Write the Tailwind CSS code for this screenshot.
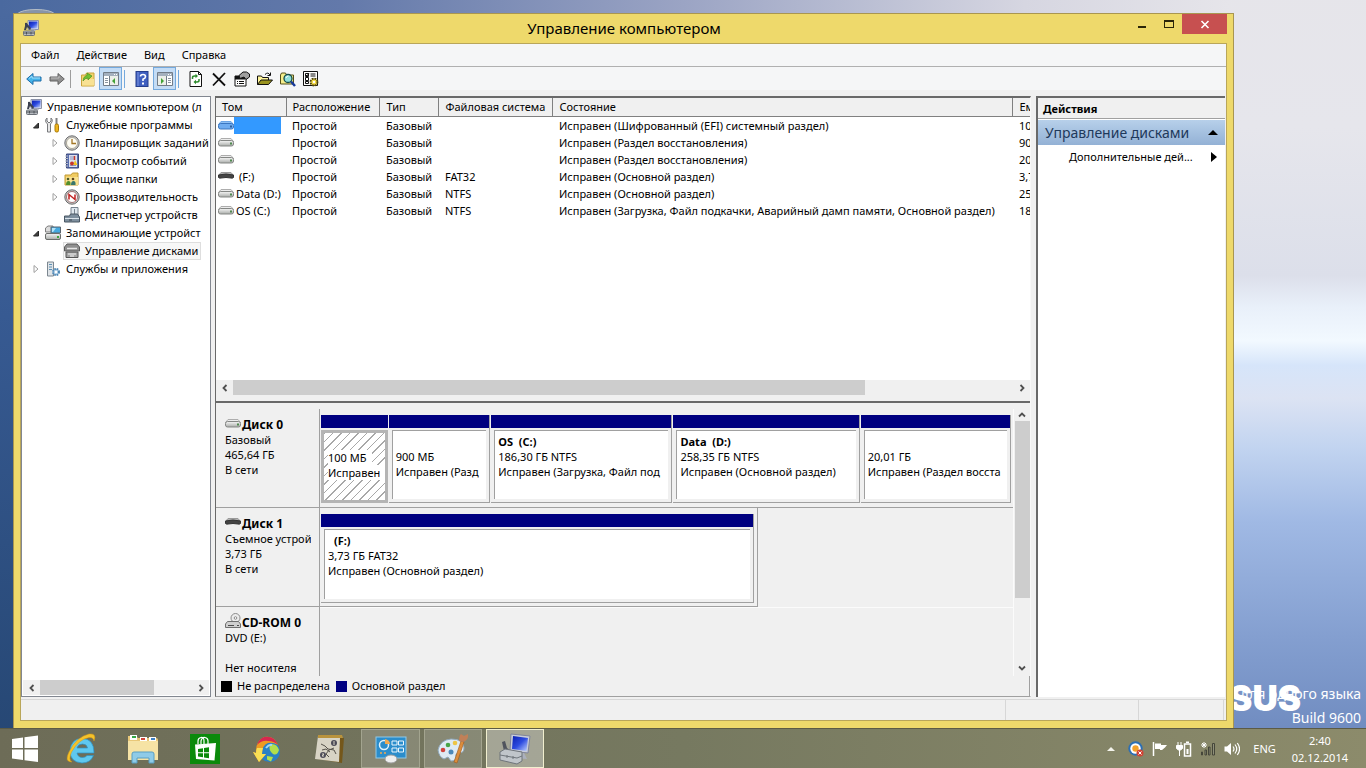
<!DOCTYPE html>
<html lang="ru">
<head>
    <meta charset="UTF-8">
    <meta name="viewport" content="width=device-width, initial-scale=1.0">
    <title>Управление компьютером</title>
    <script src="https://cdn.jsdelivr.net/npm/@tailwindcss/browser@4"></script>
</head>
<body class="relative flex h-screen flex-col overflow-hidden font-['Noto_Sans','Open_Sans',sans-serif] text-[11px] leading-[18px] text-black">

    <!-- shared icons -->
    <svg class="absolute size-0" aria-hidden="true">
        <defs>
            <linearGradient id="gMetal" x1="0" y1="0" x2="0" y2="1"><stop offset="0" stop-color="#f6f6f6"/><stop offset="1" stop-color="#a9aca9"/></linearGradient>
            <linearGradient id="gScreen" x1="0" y1="0" x2="1" y2="1"><stop offset="0" stop-color="#0a1fb0"/><stop offset=".5" stop-color="#2d4be0"/><stop offset="1" stop-color="#c2d4ff"/></linearGradient>
        </defs>
        <symbol id="drive" viewBox="0 0 16 16">
            <path d="M3 4.500h10l2.500 3H.5z" fill="#ececec" stroke="#adadad"/>
            <rect x=".5" y="6.500" width="15" height="5.500" rx="2" fill="url(#gMetal)" stroke="#858785"/>
            <rect x="12" y="8.500" width="2" height="2" fill="#4f8a4f"/>
        </symbol>
        <symbol id="drive-blue" viewBox="0 0 16 16">
            <path d="M3 4.500h10l2.500 3H.5z" fill="#8ec0f5" stroke="#6ba5e6"/>
            <rect x=".5" y="6.500" width="15" height="5.500" rx="2" fill="#6facf0" stroke="#3b76c0"/>
            <rect x="12" y="8.500" width="2" height="2" fill="#2a5f9f"/>
        </symbol>
        <symbol id="removable" viewBox="0 0 16 16">
            <path d="M3 4.500h10l2.500 3H.5z" fill="#b5b5b5" stroke="#9a9a9a"/>
            <path d="M.5 7Q8 5 15.500 7v2.500q-1 1-2.500.5-5-1-10 0-1.500.5-2.500-.5z" fill="#444" stroke="#333"/>
        </symbol>
        <symbol id="computer" viewBox="0 0 16 16">
            <path d="M5 .5h10.500v9H5z" fill="#d9dce6" stroke="#8c92a8"/>
            <path d="M6 1.500h8.500v7H6z" fill="url(#gScreen)"/>
            <path d="M8 9.500h4l1 1.500H8z" fill="#b3b7c4"/>
            <path d="M2 3q2-1 2.500 1L8 8l-1 2-3-3-1 3H1l1-4z" fill="#3d4150"/>
            <rect x=".5" y="11" width="11" height="4.500" rx="1" fill="#b9bdc2" stroke="#6b7077"/>
            <path d="M1 13h10M3.500 12v2.500M8 12v2.500" stroke="#4d5258"/>
        </symbol>
        <symbol id="chev-l" viewBox="0 0 8 8"><path d="M5.500 1 2.500 4l3 3" fill="none" stroke="#505050" stroke-width="1.800"/></symbol>
        <symbol id="chev-r" viewBox="0 0 8 8"><path d="M2.500 1l3 3-3 3" fill="none" stroke="#505050" stroke-width="1.800"/></symbol>
        <symbol id="tri-open" viewBox="0 0 8 8"><path d="M6.500 2v5h-5z" fill="#404040" stroke="#262626"/></symbol>
        <symbol id="tri-closed" viewBox="0 0 8 8"><path d="M2 .500v7L6 4z" fill="#fff" stroke="#a0a0a0"/></symbol>
    </svg>

    <!-- wallpaper -->
    <svg class="absolute inset-0 -z-10 h-full w-full" viewBox="0 0 1366 768" preserveAspectRatio="none" aria-hidden="true">
        <defs>
            <linearGradient id="wTop"><stop offset="0" stop-color="#4a699f"/><stop offset=".25" stop-color="#6379aa"/><stop offset=".5" stop-color="#9ba4c4"/><stop offset=".75" stop-color="#d6d6e1"/><stop offset=".9" stop-color="#e6e5ea"/></linearGradient>
            <linearGradient id="wLeft" x1="0" y1="0" x2="0" y2="1"><stop offset="0" stop-color="#4a699f"/><stop offset=".4" stop-color="#375a92"/><stop offset="1" stop-color="#254672"/></linearGradient>
            <linearGradient id="wRight" x1="0" y1="0" x2="0" y2="1">
                <stop offset="0" stop-color="#e6e5ea"/><stop offset=".18" stop-color="#e6e6ec"/><stop offset=".36" stop-color="#dcdfea"/><stop offset=".4" stop-color="#e9f0fa"/><stop offset=".44" stop-color="#f2f9ff"/>
                <stop offset=".47" stop-color="#d6e5fa"/><stop offset=".51" stop-color="#dce3f3"/><stop offset=".57" stop-color="#c2d4f0"/><stop offset=".66" stop-color="#a0b9e4"/><stop offset=".8" stop-color="#849fd0"/><stop offset=".94" stop-color="#6c88bd"/>
            </linearGradient>
        </defs>
        <rect width="1366" height="768" fill="url(#wTop)"/>
        <rect y="14" width="600" height="754" fill="url(#wLeft)"/>
        <path d="M1230-20 1380 0V800H1230z" fill="url(#wRight)"/>
        <path d="M17 14Q22 9.500 36 9.500T55 14" fill="#8794a8" stroke="#b4bdc6"/>
    </svg>

    <main class="relative flex min-h-0 flex-1 pt-[13px] pr-[132px] pl-[13px]">

        <div class="absolute right-[65px] bottom-3 font-['Inter',sans-serif] text-[35px] leading-[35px] font-black text-white" aria-hidden="true">SUS</div>
        <div class="absolute right-[5px] -bottom-[2px] text-right text-[14px] leading-6 text-white">
            <p>для одного языка</p>
            <p>Build 9600</p>
        </div>

        <div class="relative flex min-w-0 flex-1 flex-col border border-b-0 border-[#a99650] bg-[#eed96b] px-[6px] pb-[7px]">
            <!-- title bar -->
            <header class="flex h-[29px] items-start">
                <svg class="mt-[6px] ml-[3px] size-4"><use href="#computer"/></svg>
                <h1 class="mt-[5px] ml-20 flex-1 text-center text-[15px]">Управление компьютером</h1>
                <button aria-label="Свернуть" class="flex h-5 w-[26px] items-center justify-center"><svg class="size-3" viewBox="0 0 12 12"><path d="M2 8h8v2H2z" fill="#2b2608"/></svg></button>
                <button aria-label="Развернуть" class="flex h-5 w-[27px] items-center justify-center"><svg class="size-3" viewBox="0 0 12 12"><path d="M1 2h10v8H1zM2 4v5h8V4z" fill="#2b2608" fill-rule="evenodd"/></svg></button>
                <button aria-label="Закрыть" class="flex h-5 w-[45px] items-center justify-center bg-[#c75050]"><svg class="size-3" viewBox="0 0 12 12"><path d="M2.500 3l7 7M9.500 3l-7 7" stroke="#fff" stroke-width="1.600"/></svg></button>
            </header>

            <div class="flex min-h-0 flex-1 flex-col border border-[#b9a65a] bg-[#f0f0f0]">
                <nav class="flex h-[23px] items-center gap-[17px] border-b border-[#b0b0b0] bg-[#f5f6f7] pl-[10px]">
                    <button>Файл</button>
                    <button>Действие</button>
                    <button>Вид</button>
                    <button>Справка</button>
                </nav>

                <!-- toolbar -->
                <div class="flex h-[23px] items-center bg-[#f5f6f7] pl-px">
                    <button aria-label="Назад" class="flex size-[23px] items-center justify-center"><svg class="size-4" viewBox="0 0 16 16"><path d="M.7 8 7 2.500V6h8v4H7v3.500z" fill="#45b4ea" stroke="#1f6ca8"/><path d="M3 7.500 6 5v2h8" fill="none" stroke="#a5e0fa"/></svg></button>
                    <button aria-label="Вперёд" class="flex size-[23px] items-center justify-center"><svg class="size-4" viewBox="0 0 16 16"><path d="M15.300 8 9 2.500V6H1v4h8v3.500z" fill="#929292" stroke="#636363"/><path d="M2 7h8V5" fill="none" stroke="#bcbcbc"/></svg></button>
                    <span class="mr-[5px] ml-[2px] h-[18px] w-px bg-[#9d9d9d]"></span>
                    <button aria-label="На уровень вверх" class="flex size-[23px] items-center justify-center"><svg class="size-4" viewBox="0 0 16 16"><path d="M1.500 4h4l1-2h7.500v13H1.500z" fill="#f3d36d" stroke="#c9a33c"/><path d="M2 8h12v6.500H2z" fill="#f8e193"/><path d="M3 10Q3.500 5 7 4.500V2l5 3-4 4V7Q5 7 3 10z" fill="#6fc033" stroke="#4a9020" stroke-width=".7"/></svg></button>
                    <button aria-label="Дерево консоли" aria-pressed="true" class="flex size-[23px] items-center justify-center border border-[#74a9dd] bg-[#c4dcf5]"><svg class="size-4" viewBox="0 0 16 16"><path d="M.5 1.500h15v13H.5z" fill="#fff" stroke="#727c88"/><path d="M1 2h14v3H1z" fill="#a4b0be"/><path d="M11 3.500h1M13 3.500h1" stroke="#fff"/><path d="M6.500 5v9" stroke="#727c88"/><path d="M2 7.500h3M2 9.500h3M2 11.500h3" stroke="#8b95a0"/><path d="M7 5h8v9H7z" fill="#ecefe9"/><path d="M12 7v6L9 10z" fill="#42a337"/></svg></button>
                    <span class="mr-[5px] ml-[2px] h-[18px] w-px bg-[#74a9dd]"></span>
                    <button aria-label="Справка" class="flex size-[23px] items-center justify-center"><svg class="size-4" viewBox="0 0 16 16"><rect x="2" y=".5" width="12" height="15" fill="#3f5fc0" stroke="#263f8c"/><path d="M4 1v14" stroke="#7f98e0"/><path d="M6.500 5.500Q6.500 3.500 9 3.500t2.500 2.200Q11.500 7 9 8.300V10" fill="none" stroke="#fff" stroke-width="1.600"/><path d="M8 11.500h2v2H8z" fill="#fff"/></svg></button>
                    <button aria-label="Панель действий" aria-pressed="true" class="flex size-[23px] items-center justify-center border border-[#74a9dd] bg-[#c4dcf5]"><svg class="size-4" viewBox="0 0 16 16"><path d="M.5 1.500h15v13H.5z" fill="#fff" stroke="#727c88"/><path d="M1 2h14v3H1z" fill="#a4b0be"/><path d="M11 3.500h1M13 3.500h1" stroke="#fff"/><path d="M1 5h8v9H1z" fill="#ecefe9"/><path d="M9.500 5v9" stroke="#727c88"/><path d="M11 7.500h3M11 9.500h3M11 11.500h3" stroke="#8b95a0"/><path d="M4 7v6l3-3z" fill="#42a337"/></svg></button>
                    <span class="mr-[5px] ml-[2px] h-[18px] w-px bg-[#74a9dd]"></span>
                    <button aria-label="Обновить" class="flex size-[23px] items-center justify-center"><svg class="size-4" viewBox="0 0 16 16"><path d="M2 .5h8.500l3 3v12H2z" fill="#fff" stroke="#111"/><path d="M10.500.5v3h3" fill="none" stroke="#111"/><path d="M4.500 8V6.500q0-1.500 2-1.500h2" fill="none" stroke="#2c8a2c" stroke-width="1.500"/><path d="M7.500 2.800 10 5 7.500 7.300z" fill="#2c8a2c"/><path d="M11 8v1.500q0 1.500-2 1.500H7" fill="none" stroke="#2c8a2c" stroke-width="1.500"/><path d="M8 8.800 5.500 11 8 13.300z" fill="#2c8a2c"/></svg></button>
                    <button aria-label="Удалить" class="flex size-[23px] items-center justify-center"><svg class="size-4" viewBox="0 0 16 16"><path d="M2 2.500l12 12M14 2 2 14.500" stroke="#111" stroke-width="1.800"/></svg></button>
                    <button aria-label="Свойства" class="flex size-[23px] items-center justify-center"><svg class="size-4" viewBox="0 0 16 16"><path d="M1 5h11v10H1z" fill="#fff" stroke="#111"/><path d="M1 5h10v3.500H1z" fill="#111"/><path d="M3 10.500h1m1 0h5M3 12.500h1m1 0h5" stroke="#111"/><path d="M5 4.500 9 1h3.500l3 2v3L12 8.500 10 6 6 7.500z" fill="#9f9f9f" stroke="#111"/></svg></button>
                    <button aria-label="Открыть" class="flex size-[23px] items-center justify-center"><svg class="size-4" viewBox="0 0 16 16"><path d="M.5 13.500V5h4l1 1.500h6V9" fill="#fff59a" stroke="#111"/><path d="M.5 13.500 4 9h11.500l-4 4.500z" fill="#9a9420" stroke="#111"/><path d="M8 3.500q3-3 5 .5M13.500 1.500v3h-3" fill="none" stroke="#111"/></svg></button>
                    <button aria-label="Найти" class="flex size-[23px] items-center justify-center"><svg class="size-4" viewBox="0 0 16 16"><path d="M.5 13V4l1-2h4l1 2h7v9z" fill="#f5ee8c" stroke="#55501a"/><circle cx="8" cy="7.500" r="4" fill="#8fe0dc" stroke="#164c4a" stroke-width="1.300"/><path d="M6 7q.5-2 2.500-2" fill="none" stroke="#fff"/><path d="M11 10.500l4 4.500" stroke="#173a9a" stroke-width="2.500"/></svg></button>
                    <button aria-label="Параметры" class="flex size-[23px] items-center justify-center"><svg class="size-4" viewBox="0 0 16 16"><path d="M.5.5h14v14H.5z" fill="#fff" stroke="#111"/><path d="M2.500 2.500h3v3h-3zM2.500 6.500h3v3h-3zM2.500 10.500h3v2h-3z" fill="none" stroke="#111"/><path d="M3 4l1 1 2-3M7.500 3h5M7.500 5h5" fill="none" stroke="#111"/><circle cx="11" cy="11" r="3.500" fill="#f2d840" stroke="#4b4210" stroke-width="1.800" stroke-dasharray="1.900 .850"/><circle cx="11" cy="11" r="1.200" fill="#fff"/></svg></button>
                </div>

                <div class="mt-[6px] flex min-h-0 flex-1">

                    <!-- console tree -->
                    <aside class="flex w-[190px] flex-col border border-[#828790] bg-white px-px pb-px">
                        <ul class="flex-1 overflow-hidden pt-px whitespace-nowrap">
                            <li class="flex items-center gap-[5px] pl-[3px]"><svg class="size-4 shrink-0"><use href="#computer"/></svg><button>Управление компьютером (л</button></li>
                            <li class="flex items-center pl-1">
                                <svg class="mx-[5px] size-2 shrink-0"><use href="#tri-open"/></svg>
                                <svg class="mr-[5px] size-4 shrink-0" viewBox="0 0 16 16"><path d="M2 1v3l2 2 2-2V1q2 1.500 1 4L5.500 7v8h-3V7L.8 5Q0 2.500 2 1z" fill="#e8e8e8" stroke="#77797c"/><path d="M11.500 1v7" stroke="#808080" stroke-width="2"/><rect x="10" y="7" width="3.500" height="8" rx="1.500" fill="#f0b61e" stroke="#a87a08"/></svg>
                                <button>Служебные программы</button>
                            </li>
                            <li class="flex items-center pl-[23px]">
                                <svg class="mx-[5px] size-2 shrink-0"><use href="#tri-closed"/></svg>
                                <svg class="mr-[5px] size-4 shrink-0" viewBox="0 0 16 16"><circle cx="8" cy="8" r="7.200" fill="#c7c7c7" stroke="#6f6f6f"/><circle cx="8" cy="8" r="5.500" fill="#fffdf3" stroke="#98927e" stroke-width=".7"/><path d="M8 4v4.500h4" fill="none" stroke="#a37625" stroke-width="1.300"/></svg>
                                <button>Планировщик заданий</button>
                            </li>
                            <li class="flex items-center pl-[23px]">
                                <svg class="mx-[5px] size-2 shrink-0"><use href="#tri-closed"/></svg>
                                <svg class="mr-[5px] size-4 shrink-0" viewBox="0 0 16 16"><path d="M2.500 1h12v14h-12z" fill="#5a6fae" stroke="#39477c"/><path d="M5 2h8v12H5z" fill="#dcdfee"/><path d="M6 4h5M6 6h5M6 12.500h6" stroke="#8b96c0"/><path d="M1 3h3M1 5.500h3M1 8h3M1 10.500h3M1 13h3" stroke="#b9bdc8"/><path d="M10.500 3v4" stroke="#c5362b" stroke-width="1.500"/><circle cx="8" cy="10.500" r="2" fill="#c5362b"/><path d="M11 7l2.500 5h-4z" fill="#f2c21c"/></svg>
                                <button>Просмотр событий</button>
                            </li>
                            <li class="flex items-center pl-[23px]">
                                <svg class="mx-[5px] size-2 shrink-0"><use href="#tri-closed"/></svg>
                                <svg class="mr-[5px] size-4 shrink-0" viewBox="0 0 16 16"><path d="M1 4h6l1.500-2H14v12H1z" fill="#f1cc62" stroke="#c19a35"/><path d="M2 6h12v8H2z" fill="#f8e18e"/><circle cx="4" cy="8" r="1.300" fill="#4e5b28"/><path d="M2 14q0-4 2.500-4T6.500 14z" fill="#548e2b"/><circle cx="9" cy="8" r="1.300" fill="#5d431d"/><path d="M7 14q0-4 2.500-4t2 4z" fill="#39766a"/></svg>
                                <button>Общие папки</button>
                            </li>
                            <li class="flex items-center pl-[23px]">
                                <svg class="mx-[5px] size-2 shrink-0"><use href="#tri-closed"/></svg>
                                <svg class="mr-[5px] size-4 shrink-0" viewBox="0 0 16 16"><circle cx="8" cy="8" r="7.200" fill="#c7c7c7" stroke="#6a6a6a"/><circle cx="8" cy="8" r="5.500" fill="#fff" stroke="#8f5a5a" stroke-width=".8"/><path d="M5 10.500V5.500l6 5V5.500" fill="none" stroke="#c02020" stroke-width="1.500"/></svg>
                                <button>Производительность</button>
                            </li>
                            <li class="flex items-center pl-[41px]">
                                <svg class="mr-[5px] size-4 shrink-0" viewBox="0 0 16 16"><path d="M7 .5h7V8H7z" fill="#dfe7ee" stroke="#76828e"/><path d="M10.500 2v5" stroke="#76828e"/><path d="M.5 9h5l1-2h7l2 3v5H.5z" fill="#7e8f9e" stroke="#485663"/><path d="M1 11.500h14" stroke="#d9e2ea"/><path d="M5 13h3" stroke="#3c4650"/></svg>
                                <button>Диспетчер устройств</button>
                            </li>
                            <li class="flex items-center pl-1">
                                <svg class="mx-[5px] size-2 shrink-0"><use href="#tri-open"/></svg>
                                <svg class="mr-[5px] size-4 shrink-0" viewBox="0 0 16 16"><path d="M.5 7V3L3 1h5v6z" fill="#dcdcdc" stroke="#7f7f7f"/><path d="M6 2h9.500v6H6z" fill="#45a9e0" stroke="#59656f"/><path d="M7 3h4L8 7H7z" fill="#b4e3f8"/><rect x=".5" y="8.500" width="15" height="6" rx="1.500" fill="url(#gMetal)" stroke="#6b6d6b"/><path d="M12 11h2v2h-2z" fill="#3fa63f"/></svg>
                                <button>Запоминающие устройст</button>
                            </li>
                            <li class="flex items-center pl-10">
                                <span class="flex h-[18px] items-center border border-[#dedede] bg-[#f7f7f7] pr-[2px]">
                                    <svg class="mr-[5px] size-4 shrink-0" viewBox="0 0 16 16"><path d="M3 1h10l2.500 3v4H.5V4z" fill="#8f8f8f" stroke="#5c5c5c"/><path d="M3 5.500h10" stroke="#e6e6e6" stroke-width="1.500"/><path d="M2 9h12v5.500H2z" fill="#a3a3a3" stroke="#555"/><path d="M4 11h8M6 13h4" stroke="#f3f3f3"/></svg>
                                    <button>Управление дисками</button>
                                </span>
                            </li>
                            <li class="flex items-center pl-1">
                                <svg class="mx-[5px] size-2 shrink-0"><use href="#tri-closed"/></svg>
                                <svg class="mr-[5px] size-4 shrink-0" viewBox="0 0 16 16"><path d="M2.500 1h6v14h-6z" fill="#dfe4e8" stroke="#7c8790"/><path d="M4 3.500h3M4 6h3M4 8.500h3" stroke="#5c8fb4"/><circle cx="11" cy="11" r="3" fill="#b9d4ea" stroke="#4b86b5" stroke-width="2" stroke-dasharray="1.600 .8"/><circle cx="11" cy="11" r="1.200" fill="#fff"/></svg>
                                <button>Службы и приложения</button>
                            </li>
                        </ul>
                        <div class="flex h-[15px] items-center bg-[#f0f0f0]">
                            <button aria-label="Прокрутить влево" class="flex w-[17px] justify-center"><svg class="size-2"><use href="#chev-l"/></svg></button>
                            <div class="flex h-full flex-1"><div class="h-full w-3/4 bg-[#cdcdcd]"></div></div>
                            <button aria-label="Прокрутить вправо" class="flex w-[17px] justify-center"><svg class="size-2"><use href="#chev-r"/></svg></button>
                        </div>
                    </aside>

                    <!-- volumes and disks -->
                    <section class="ml-1 flex min-w-0 flex-1 flex-col border-t-2 border-r border-b border-l border-[#696969] border-r-[#f8f8f8] border-b-[#a0a0a0]">
                        <div class="flex h-[305px] flex-col border-b-2 border-[#696969]">
                            <div class="min-h-0 flex-1 overflow-hidden bg-white">
                                <table class="w-full table-fixed text-left leading-[17px] whitespace-nowrap">
                                    <colgroup><col class="w-[70px]"><col class="w-[93px]"><col class="w-[59px]"><col class="w-[114px]"><col><col class="w-[18px]"></colgroup>
                                    <thead>
                                        <tr class="h-[18px] bg-[#f0f0f0]">
                                            <th class="overflow-hidden border-r border-b border-[#808080] pl-[6px] font-normal">Том</th>
                                            <th class="overflow-hidden border-r border-b border-[#808080] pl-[6px] font-normal">Расположение</th>
                                            <th class="overflow-hidden border-r border-b border-[#808080] pl-[7px] font-normal">Тип</th>
                                            <th class="overflow-hidden border-r border-b border-[#808080] pl-[7px] font-normal">Файловая система</th>
                                            <th class="overflow-hidden border-r border-b border-[#808080] pl-[7px] font-normal">Состояние</th>
                                            <th class="overflow-hidden border-b border-[#808080] pl-[7px] font-normal">Ем</th>
                                        </tr>
                                    </thead>
                                    <tbody>
                                        <tr>
                                            <td class="p-0"><div class="flex items-center pl-[2px]"><svg class="size-4 shrink-0"><use href="#drive-blue"/></svg><span class="mr-[5px] h-[17px] flex-1 bg-[#3399ff]"></span></div></td>
                                            <td class="pl-[6px]">Простой</td><td class="pl-[7px]">Базовый</td><td class="pl-[7px]"></td>
                                            <td class="pl-[7px]">Исправен (Шифрованный (EFI) системный раздел)</td><td class="overflow-hidden pl-[7px]">10</td>
                                        </tr>
                                        <tr>
                                            <td class="p-0"><div class="flex items-center pl-[2px]"><svg class="size-4 shrink-0"><use href="#drive"/></svg></div></td>
                                            <td class="pl-[6px]">Простой</td><td class="pl-[7px]">Базовый</td><td class="pl-[7px]"></td>
                                            <td class="pl-[7px]">Исправен (Раздел восстановления)</td><td class="overflow-hidden pl-[7px]">90</td>
                                        </tr>
                                        <tr>
                                            <td class="p-0"><div class="flex items-center pl-[2px]"><svg class="size-4 shrink-0"><use href="#drive"/></svg></div></td>
                                            <td class="pl-[6px]">Простой</td><td class="pl-[7px]">Базовый</td><td class="pl-[7px]"></td>
                                            <td class="pl-[7px]">Исправен (Раздел восстановления)</td><td class="overflow-hidden pl-[7px]">20</td>
                                        </tr>
                                        <tr>
                                            <td class="p-0"><div class="flex items-center gap-[5px] pl-[2px]"><svg class="size-4 shrink-0"><use href="#removable"/></svg>(F:)</div></td>
                                            <td class="pl-[6px]">Простой</td><td class="pl-[7px]">Базовый</td><td class="pl-[7px]">FAT32</td>
                                            <td class="pl-[7px]">Исправен (Основной раздел)</td><td class="overflow-hidden pl-[7px]">3,7</td>
                                        </tr>
                                        <tr>
                                            <td class="p-0"><div class="flex items-center gap-[2px] pl-[2px]"><svg class="size-4 shrink-0"><use href="#drive"/></svg>Data (D:)</div></td>
                                            <td class="pl-[6px]">Простой</td><td class="pl-[7px]">Базовый</td><td class="pl-[7px]">NTFS</td>
                                            <td class="pl-[7px]">Исправен (Основной раздел)</td><td class="overflow-hidden pl-[7px]">25</td>
                                        </tr>
                                        <tr>
                                            <td class="p-0"><div class="flex items-center gap-[2px] pl-[2px]"><svg class="size-4 shrink-0"><use href="#drive"/></svg>OS (C:)</div></td>
                                            <td class="pl-[6px]">Простой</td><td class="pl-[7px]">Базовый</td><td class="pl-[7px]">NTFS</td>
                                            <td class="pl-[7px]">Исправен (Загрузка, Файл подкачки, Аварийный дамп памяти, Основной раздел)</td><td class="overflow-hidden pl-[7px]">18</td>
                                        </tr>
                                    </tbody>
                                </table>
                            </div>
                            <div class="mb-[6px] flex h-[15px] items-center">
                                <button aria-label="Прокрутить влево" class="flex w-[17px] justify-center"><svg class="size-2"><use href="#chev-l"/></svg></button>
                                <div class="flex h-full flex-1"><div class="h-full w-[81%] bg-[#cdcdcd]"></div></div>
                                <button aria-label="Прокрутить вправо" class="flex w-[17px] justify-center"><svg class="size-2"><use href="#chev-r"/></svg></button>
                            </div>
                        </div>

                        <div class="flex min-h-0 flex-1 pt-[6px] leading-[15px]">
                            <div class="min-w-0 flex-1 overflow-hidden whitespace-nowrap">
                                <div class="flex h-[99px]">
                                    <div class="w-[104px] overflow-hidden border-r border-b border-[#a0a0a0] pt-2 pr-2 pl-[9px]">
                                        <h2 class="flex items-center text-[12px] font-bold"><svg class="mt-[-4px] mr-px size-4"><use href="#drive"/></svg>Диск 0</h2>
                                        <p>Базовый</p><p>465,64 ГБ</p><p>В сети</p>
                                    </div>
                                    <div class="flex min-w-0 flex-1 gap-px border-b border-[#a0a0a0] pt-[6px] pr-[2px] pb-1 pl-px">
                                        <div class="flex min-w-0 flex-[67] flex-col">
                                            <div class="h-[13px] bg-[#000080]"></div>
                                            <div class="mt-[2px] flex-1 overflow-hidden border-[3px] border-[#b4b4b4] bg-white bg-[repeating-linear-gradient(135deg,#a8a8a8_0px,#a8a8a8_1px,#fff_1px,#fff_6px)] pt-[17px] pl-1">
                                                <p class="w-[44px] bg-white">100 МБ</p><p class="bg-white">Исправен</p>
                                            </div>
                                        </div>
                                        <div class="flex min-w-0 flex-[101] flex-col border-r border-b border-[#a0a0a0]">
                                            <div class="h-[13px] bg-[#000080]"></div>
                                            <div class="mx-[3px] mt-[2px] mb-[3px] flex-1 overflow-hidden border-t border-l border-[#a0a0a0] bg-white pt-[18px] pr-1 pl-[3px]">
                                                <p>900 МБ</p><p class="overflow-hidden">Исправен (Разд</p>
                                            </div>
                                        </div>
                                        <div class="flex min-w-0 flex-[181] flex-col border-r border-b border-[#a0a0a0]">
                                            <div class="h-[13px] bg-[#000080]"></div>
                                            <div class="mx-[3px] mt-[2px] mb-[3px] flex-1 overflow-hidden border-t border-l border-[#a0a0a0] bg-white pt-[3px] pr-1 pl-[3px]">
                                                <p class="font-bold">OS &nbsp;(C:)</p><p>186,30 ГБ NTFS</p><p class="overflow-hidden">Исправен (Загрузка, Файл под</p>
                                            </div>
                                        </div>
                                        <div class="flex min-w-0 flex-[186] flex-col border-r border-b border-[#a0a0a0]">
                                            <div class="h-[13px] bg-[#000080]"></div>
                                            <div class="mx-[3px] mt-[2px] mb-[3px] flex-1 overflow-hidden border-t border-l border-[#a0a0a0] bg-white pt-[3px] pr-1 pl-[3px]">
                                                <p class="font-bold">Data &nbsp;(D:)</p><p>258,35 ГБ NTFS</p><p>Исправен (Основной раздел)</p>
                                            </div>
                                        </div>
                                        <div class="flex min-w-0 flex-[150] flex-col border-r border-b border-[#a0a0a0]">
                                            <div class="h-[13px] bg-[#000080]"></div>
                                            <div class="mx-[3px] mt-[2px] mb-[3px] flex-1 overflow-hidden border-t border-l border-[#a0a0a0] bg-white pt-[18px] pr-1 pl-[3px]">
                                                <p>20,01 ГБ</p><p class="overflow-hidden">Исправен (Раздел восста</p>
                                            </div>
                                        </div>
                                    </div>
                                </div>

                                <div class="flex h-[99px]">
                                    <div class="w-[104px] overflow-hidden border-r border-b border-[#a0a0a0] pt-2 pr-2 pl-[9px]">
                                        <h2 class="flex items-center text-[12px] font-bold"><svg class="mt-[-4px] mr-px size-4"><use href="#removable"/></svg>Диск 1</h2>
                                        <p class="overflow-hidden">Съемное устройство</p><p>3,73 ГБ</p><p>В сети</p>
                                    </div>
                                    <div class="flex w-[55%] border-r border-b border-[#a0a0a0] pt-[6px] pr-[3px] pb-[3px] pl-px">
                                        <div class="flex min-w-0 flex-1 flex-col border-r border-b border-[#a0a0a0]">
                                            <div class="h-[13px] bg-[#000080]"></div>
                                            <div class="mx-[3px] mt-[2px] mb-[3px] flex-1 border-t border-l border-[#a0a0a0] bg-white pt-[3px] pl-[3px]">
                                                <p class="pl-[6px] font-bold">(F:)</p><p>3,73 ГБ FAT32</p><p>Исправен (Основной раздел)</p>
                                            </div>
                                        </div>
                                    </div>
                                </div>

                                <div class="flex h-[99px]">
                                    <div class="w-[104px] border-r border-[#a0a0a0] pt-2 pl-[9px]">
                                        <h2 class="flex items-center text-[12px] font-bold">
                                            <svg class="mt-[-4px] mr-px size-4" viewBox="0 0 16 16"><circle cx="10.500" cy="5" r="4.500" fill="#ececec" stroke="#8b8b8b"/><circle cx="10.500" cy="5" r="1.300" fill="#fff" stroke="#8b8b8b"/><path d="M.5 11l2-2.500h11l2 2.500v3.500H.5z" fill="#cfcfcf" stroke="#6f6f6f"/><path d="M3 12.500h6M12 12.500h2" stroke="#4b4b4b"/></svg>CD-ROM 0
                                        </h2>
                                        <p>DVD (E:)</p><p>&nbsp;</p><p>Нет носителя</p>
                                    </div>
                                    <div class="flex-1 border-t border-[#fbfbfb]"></div>
                                </div>
                            </div>
                            <div class="flex w-[17px] flex-col items-center border-l border-[#fbfbfb]">
                                <button aria-label="Прокрутить вверх" class="flex h-3 items-center"><svg class="size-2 rotate-90"><use href="#chev-l"/></svg></button>
                                <div class="w-[15px] flex-1"><div class="h-[74%] w-full bg-[#cdcdcd]"></div></div>
                                <button aria-label="Прокрутить вниз" class="flex h-4 items-center"><svg class="size-2 rotate-90"><use href="#chev-r"/></svg></button>
                            </div>
                        </div>

                        <div class="flex h-5 items-center border-r border-[#a0a0a0] pl-[5px]">
                            <span class="mr-[5px] size-[11px] bg-black"></span>Не распределена
                            <span class="mr-[5px] ml-[6px] size-[11px] bg-[#000080]"></span>Основной раздел
                        </div>
                    </section>

                    <!-- actions -->
                    <aside class="mr-px ml-[5px] w-[189px] border-t-2 border-l-2 border-[#696969] bg-white">
                        <h2 class="h-[21px] border-b border-[#a0a0a0] bg-[#f0f0f0] pl-[5px] text-[11px] leading-[21px] font-bold">Действия</h2>
                        <button class="mt-px flex h-[25px] w-full items-center justify-between bg-linear-to-b from-[#b7d0ea] to-[#93b1d5] pr-[7px] pl-[7px] text-[14px] text-[#1e395b]">Управление дисками
                            <svg class="h-[5px] w-[10px]" viewBox="0 0 10 5"><path d="M5 0l5 5H0z" fill="#000"/></svg>
                        </button>
                        <button class="mt-[3px] flex w-full items-center justify-between pr-2 pl-[31px]">Дополнительные дей...
                            <svg class="h-[10px] w-[6px]" viewBox="0 0 6 10"><path d="M0 0l6 5-6 5z" fill="#000"/></svg>
                        </button>
                    </aside>
                </div>

                <footer class="mt-[2px] flex h-[21px] justify-end border-t border-[#d7d7d7]">
                    <span class="w-[133px] border-l border-[#d7d7d7]"></span>
                    <span class="mr-[2px] w-[86px] border-x border-[#d7d7d7]"></span>
                </footer>
            </div>
        </div>
    </main>

    <!-- taskbar -->
    <footer class="flex h-10 items-stretch border-t border-[#5c5b45] bg-linear-to-r from-[#6d6c57] via-[#767960] to-[#8c8b6b] text-white">
        <button aria-label="Пуск" class="flex w-[49px] items-center justify-center"><svg class="size-7" viewBox="0 0 28 28"><path d="M1 4l11-1.500V13H1zM13.500 2.300 27 .5V13H13.500zM1 14.500h11v10.500L1 23.500zM13.500 14.500H27V27l-13.500-1.800z" fill="#fff"/></svg></button>
        <button aria-label="Internet Explorer" class="flex w-[63px] items-center justify-center"><svg class="size-8" viewBox="0 0 32 32"><path d="M29 20H12q1 4.500 5.500 4.500 3 0 4.500-2H28.500Q25.500 30 17 30 5 29 5 18 6 5.500 17 5.500q12 0 12 14.500zM12 15h10.500q-.5-4-5-4T12 15z" fill="#5fc8ef" stroke="#2b93c8" stroke-width=".7"/><path d="M7 29Q-1 29 4 19 11 4 24 1q8-1 5 7-.500-4-5-3.500Q14 6 6.500 19 3 27 7 29z" fill="#f5c22a" stroke="#d79a12" stroke-width=".5"/></svg></button>
        <button aria-label="Проводник" class="flex w-[62px] items-center justify-center"><svg class="size-8" viewBox="0 0 32 32"><path d="M1 8V3h8l2 2h18q2 0 2 2v20H1z" fill="#e9c878"/><path d="M3 2h7v5H3zM13 4h7v4h-7zM22 4h7v4h-7z" fill="#fff"/><path d="M5 3h4v2H5z" fill="#35a847"/><path d="M14 5h4v2h-4z" fill="#d1463a"/><path d="M24 5h4v2h-4z" fill="#3f81c7"/><path d="M1 8h30v19H1z" fill="#f6e3a5"/><path d="M5 30V21q0-2 2-2h18q2 0 2 2v9h-5v-5H10v5z" fill="#8fcbe8" stroke="#599fc4"/></svg></button>
        <button aria-label="Магазин" class="flex w-[62px] items-center justify-center"><svg class="size-[30px]" viewBox="0 0 30 30"><path d="M0 0h30v30H0z" fill="#0b8a0b"/><path d="M8 10V7q0-3 3-3.500t3 3.500v3M11 10V7q1-4 4-3.500t3 3.500v3" fill="none" stroke="#fff" stroke-width="1.200"/><path d="M5 10.500 26 9l-1.500 17.500L6 25z" fill="#fff"/><path d="M8 15l5-.7v4H8zM14 14l5-.8v5h-5zM8 19.300h5v4l-5-.7zM14 19.300h5v5l-5-.8z" fill="#0b8a0b"/></svg></button>
        <button aria-label="Загрузчик" class="flex w-[62px] items-center justify-center"><svg class="size-7" viewBox="0 0 28 28"><circle cx="16.500" cy="16.500" r="10.500" fill="#2a80c4"/><path d="M17 9q7-1 9 6-2 6-6 4-5-4-3-10zM14 21l6 1-2 4.500-4-2z" fill="#b2df4b"/><path d="M13 13q3-4 6-3" fill="none" stroke="#a6d8f6" stroke-width="2"/><path d="M25 10Q21 0 11 2 2 7 3 18l-3-1 6 10 7-8H9Q9 10 15 8q5-1 10 2z" fill="#ee9a22"/><path d="M25 10Q21 0 11 2 6 4 4 10q5-5 11-4 6 0 10 4z" fill="#d6284f"/><path d="M3 18l-3-1 6 10 7-8H9q0-3 1-6H4q-1 2-1 5z" fill="#f8df55"/></svg></button>
        <button aria-label="Стратегия" class="flex w-[63px] items-center justify-center"><svg class="size-[30px]" viewBox="0 0 30 30"><path d="M4 1l25 3-2 25-24-4z" fill="#74571b"/><path d="M3 2l22 2-1 24L0 25z" fill="#d8d4c5"/><path d="M3 1h24l1 3H3z" fill="#b9933d"/><circle cx="19" cy="9" r="3" fill="#4d4c58"/><circle cx="8" cy="21" r="3" fill="#4d4c58"/><path d="M19 7v4M7 20h2l-2 2h2" fill="none" stroke="#d8d4c5"/><path d="M6 10l4 2 3 3 6 1 2 4M19 14l-5 2-3 4 3 3M7 16l4-1 4 3" fill="none" stroke="#55524a"/></svg></button>
        <button aria-label="Панель управления" class="mr-1 flex w-[59px] items-center justify-center border border-[#a3a48f] bg-white/15"><svg class="size-8" viewBox="0 0 32 32"><rect x="1" y="4" width="30" height="21" fill="#2b8dcb" stroke="#91c9e8"/><circle cx="9" cy="12" r="4.500" fill="none" stroke="#dff1fb" stroke-width="1.500"/><path d="M10 11V6q5 1 5 5z" fill="#efaa52"/><path d="M17 8h5v4h-5zM23.500 8h5v4h-5zM17 15h5v4h-5zM23.500 15h5v4h-5z" fill="none" stroke="#eaf6fd"/><circle cx="6" cy="20" r="1" fill="#efaa52"/><circle cx="10" cy="20" r="1" fill="#efaa52"/><ellipse cx="16" cy="26" rx="6" ry="4" fill="#eee" stroke="#9c9c9c"/></svg></button>
        <button aria-label="Paint" class="mr-1 flex w-[58px] items-center justify-center border border-[#a3a48f] bg-white/15"><svg class="size-8" viewBox="0 0 32 32"><path d="M14 6q13 0 13 9 0 5-5 5-4 0-3 4 0 4-5 4l-3-4-4 2Q2 24 1 17 3 7 14 6z" fill="#deeaf3" stroke="#91a9bc"/><circle cx="6" cy="17" r="2.300" fill="#cf443e"/><circle cx="11" cy="12" r="2.300" fill="#47a447"/><circle cx="18" cy="10" r="2.300" fill="#edc545"/><circle cx="14" cy="19" r="2.500" fill="#4c88b8"/><path d="M24 8l3 1-7 21-3-1z" fill="#dc8c3b" stroke="#9c5d20" stroke-width=".6"/><path d="M22 8q0-5 2-7l3 2 4-2q1 6-5 8z" fill="#c08058"/></svg></button>
        <button aria-label="Управление компьютером" class="flex w-[58px] items-center justify-center border border-[#f1efcf] bg-white/35"><svg class="size-8" viewBox="0 0 32 32"><path d="M12 1l19 2-2 17-18-2z" fill="#c8ccd9" stroke="#80859a"/><path d="M14 3l15 2-1.500 13L13 16z" fill="url(#gScreen)"/><path d="M17 19l8 1 3 6-12-1z" fill="#abb0bd"/><path d="M3 9l3-1 2 7 4 3-2 3-5-3z" fill="#50545d"/><path d="M1 19l5-3 17 3v9l-5 3-17-4z" fill="#c0c5ca" stroke="#6f757b"/><path d="M1 22l17 3 5-2M8 22v3M14 23v3" fill="none" stroke="#6f757b"/></svg></button>

        <div class="ml-auto flex items-center text-[11px] leading-[17px]">
            <button aria-label="Показать скрытые значки" class="mr-[13px]"><svg class="size-2" viewBox="0 0 8 8"><path d="M4 2l4 4H0z" fill="#f4f4ec"/></svg></button>
            <svg class="mr-2 size-4" viewBox="0 0 16 16"><circle cx="7.500" cy="7.500" r="7.200" fill="#2c6fb5"/><circle cx="7.500" cy="7.500" r="5.200" fill="#fff"/><circle cx="7.500" cy="7.500" r="3.200" fill="#f4a22c"/><circle cx="12" cy="12" r="3.500" fill="#d14334"/><path d="M10.500 10.500l3 3M13.500 10.500l-3 3" stroke="#fff"/></svg>
            <svg class="mr-2 size-4" viewBox="0 0 16 16"><path d="M1.500 1v14" stroke="#fff" stroke-width="1.500"/><path d="M3 2.500h6V4h6l-2 2.500L10 9H8V8H3z" fill="#fff"/></svg>
            <svg class="mr-2 size-4" viewBox="0 0 16 16"><path d="M2 1v3M5 1v3M.5 4.500h6v3l-2 1.500H2.500L.5 7.500zM3.500 9v6" fill="#fff" stroke="#fff"/><path d="M8.500 3h6v12h-6z" fill="none" stroke="#fff" stroke-width="1.500"/><path d="M10 .5h3V2h-3zM10.500 8h2v5h-2z" fill="#fff"/></svg>
            <svg class="mr-2 size-4" viewBox="0 0 16 16"><path d="M1.500 14v-3h1v3zM5 14V9h1.500v5zM8.500 14V6H10v8zM12.500 14V2.500h2V14z" fill="#8f907a" stroke="#45463a"/><path d="M4 1v6M1 4h6M2 2l4 4M6 2 2 6" stroke="#fff"/></svg>
            <svg class="mr-[13px] size-4" viewBox="0 0 16 16"><path d="M.5 5.500H3L7 2v12l-4-3.500H.5z" fill="#fff"/><path d="M9 5.500q2 2.500 0 5M11 3.500q3.500 4.500 0 9M13.300 2q4.500 6 0 12" fill="none" stroke="#fff" stroke-width="1.200"/></svg>
            <button class="mr-4">ENG</button>
            <button class="mr-[18px] text-center"><time datetime="2014-12-02T02:40">2:40<br>02.12.2014</time></button>
        </div>
    </footer>
</body>
</html>
